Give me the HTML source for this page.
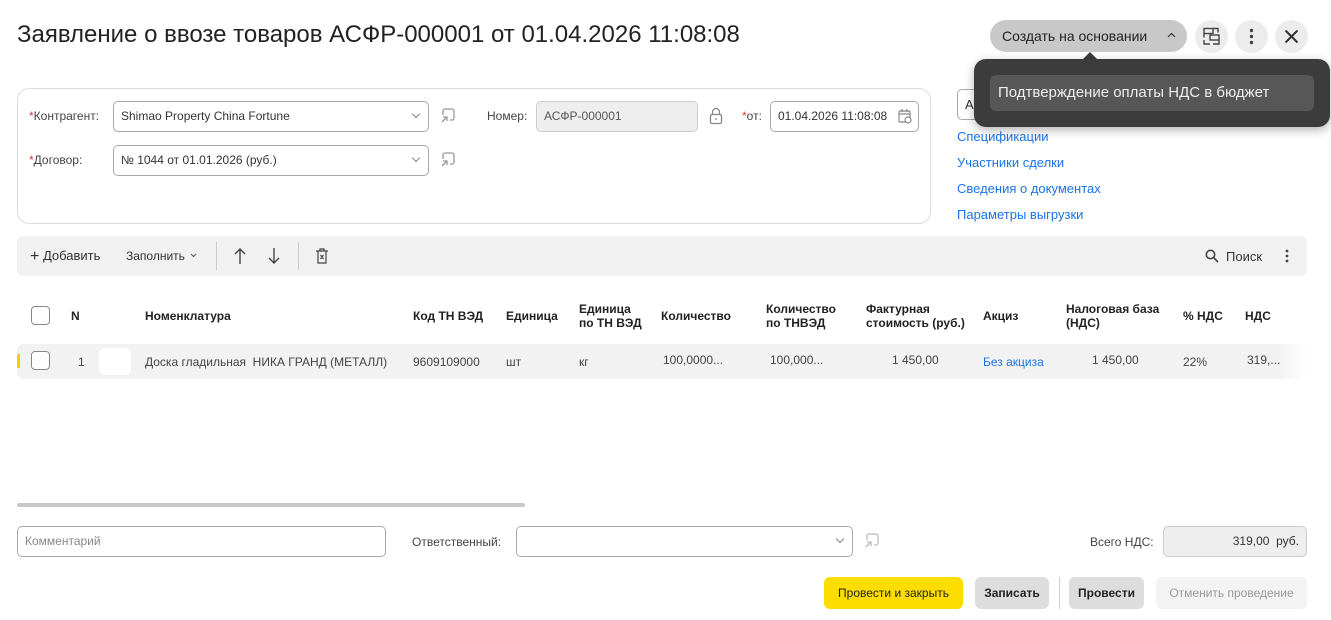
<!DOCTYPE html>
<html><head><meta charset="utf-8">
<style>
*{box-sizing:border-box;margin:0;padding:0}
body{width:1331px;height:620px;overflow:hidden;background:#fff;font-family:"Liberation Sans",sans-serif;color:#333;position:relative;font-size:12px}
.a{position:absolute;white-space:nowrap}
.inp{position:absolute;border:1px solid #aaa;border-radius:5px;background:#fff;height:31px;font-size:12px;line-height:29px;padding-left:7px;color:#333}
.lbl{position:absolute;font-size:12px;color:#444;white-space:nowrap}
.req{color:#e33}
.chev{position:absolute;right:9px;top:9px;width:6px;height:6px;border-right:1px solid #888;border-bottom:1px solid #888;transform:rotate(45deg)}
.th{position:absolute;font-size:12px;font-weight:bold;color:#222;line-height:14px;white-space:nowrap}
.td{position:absolute;font-size:12px;color:#444;white-space:nowrap;top:355px}
.link{color:#1a73e8;font-size:12px}
.rl{font-size:13px}
.cb{position:absolute;width:19px;height:19px;border:1.5px solid #888;border-radius:4px;background:#fff}
.btn{position:absolute;height:32px;border-radius:6px;font-size:12px;line-height:32px;text-align:center;color:#222}
.circ{position:absolute;width:33px;height:33px;border-radius:50%;background:#ececec}
</style></head><body>

<div class="a" style="left:17px;top:21px;font-size:24px;color:#222">Заявление о ввозе товаров АСФР-000001 от 01.04.2026 11:08:08</div>

<div class="a" style="left:990px;top:20px;width:197px;height:32px;border-radius:16px;background:#c8c8c8;font-size:14px;line-height:32px;padding-left:12px;color:#222">Создать на основании</div>
<svg class="a" style="left:1167px;top:32px" width="9" height="6" fill="none" stroke="#333" stroke-width="1.2"><path d="M1 5l3.5-3.5L8 5"/></svg>
<div class="circ" style="left:1195px;top:20px"></div>
<svg class="a" style="left:1202px;top:27px" width="19" height="19" viewBox="0 0 19 19" fill="none" stroke="#444" stroke-width="1.4"><rect x="2" y="1.5" width="9" height="5"/><rect x="8" y="8" width="9" height="5"/><path d="M2 6.5v4M2 13v4h6M17 13v4h-6M11 1.5h5v4"/></svg>
<div class="circ" style="left:1235px;top:20px"></div>
<svg class="a" style="left:1235px;top:20px" width="33" height="33"><circle cx="16.5" cy="10.5" r="1.7" fill="#444"/><circle cx="16.5" cy="16.5" r="1.7" fill="#444"/><circle cx="16.5" cy="22.5" r="1.7" fill="#444"/></svg>
<div class="circ" style="left:1275px;top:20px"></div>
<svg class="a" style="left:1275px;top:20px" width="33" height="33" stroke="#333" stroke-width="2"><path d="M10.5 10.5l12 12M22.5 10.5l-12 12"/></svg>

<div class="a" style="left:17px;top:88px;width:914px;height:136px;border:1px solid #ddd;border-radius:12px"></div>
<div class="lbl" style="left:29px;top:109px"><span class="req">*</span>Контрагент:</div>
<div class="inp" style="left:113px;top:101px;width:316px">Shimao Property China Fortune<div class="chev"></div></div>
<div class="lbl" style="left:29px;top:153px"><span class="req">*</span>Договор:</div>
<div class="inp" style="left:113px;top:145px;width:316px">№ 1044 от 01.01.2026 (руб.)<div class="chev"></div></div>
<svg class="a" style="left:439px;top:107px" width="18" height="18" fill="none" stroke="#999" stroke-width="1.3"><path d="M4 8V4a2 2 0 0 1 2-2h7a2 2 0 0 1 2 2v7a2 2 0 0 1-2 2h-2M3 15l5-5M4 10h4v4"/></svg>
<svg class="a" style="left:439px;top:151px" width="18" height="18" fill="none" stroke="#999" stroke-width="1.3"><path d="M4 8V4a2 2 0 0 1 2-2h7a2 2 0 0 1 2 2v7a2 2 0 0 1-2 2h-2M3 15l5-5M4 10h4v4"/></svg>
<div class="lbl" style="left:487px;top:109px">Номер:</div>
<div class="inp" style="left:536px;top:101px;width:162px;background:#eee;border-color:#ccc;color:#555">АСФР-000001</div>
<svg class="a" style="left:709px;top:107px" width="14" height="18" fill="none" stroke="#888" stroke-width="1.3"><rect x="1.5" y="7.5" width="11" height="9" rx="1.5"/><path d="M3.5 7.5V5a3.5 3.5 0 0 1 7 0v2.5M7 11v2"/></svg>
<div class="lbl" style="left:742px;top:109px"><span class="req">*</span>от:</div>
<div class="inp" style="left:770px;top:101px;width:149px">01.04.2026 11:08:08</div>
<svg class="a" style="left:898px;top:109px" width="14" height="15" fill="none" stroke="#888" stroke-width="1.2"><rect x="1" y="2" width="11" height="11" rx="1"/><path d="M1 5h11M4 0v3M9 0v3"/><circle cx="10" cy="11" r="3" fill="#fff"/></svg>

<div class="a" style="left:957px;top:89px;width:30px;height:31px;border:1px solid #aaa;border-radius:5px 0 0 5px;border-right:none;font-size:13px;line-height:29px;padding-left:7px">А</div>
<div class="a link rl" style="left:957px;top:129px">Спецификации</div>
<div class="a link rl" style="left:957px;top:155px">Участники сделки</div>
<div class="a link rl" style="left:957px;top:181px">Сведения о документах</div>
<div class="a link rl" style="left:957px;top:207px">Параметры выгрузки</div>

<div class="a" style="left:1082px;top:52px;width:0;height:0;border-left:8px solid transparent;border-right:8px solid transparent;border-bottom:8px solid #3c3c3c"></div>
<div class="a" style="left:974px;top:59px;width:356px;height:68px;background:#3c3c3c;border-radius:12px;box-shadow:0 3px 10px rgba(0,0,0,.3)"></div>
<div class="a" style="left:990px;top:75px;width:324px;height:36px;background:#575757;border-radius:6px;color:#eee;font-size:15px;line-height:36px;padding-left:8px">Подтверждение оплаты НДС в бюджет</div>

<div class="a" style="left:17px;top:236px;width:1290px;height:40px;background:#f1f1f1;border-radius:6px"></div>
<div class="a" style="left:30px;top:247px;font-size:13px;color:#333"><span style="font-size:16px;position:relative;top:1px">+</span> Добавить</div>
<div class="a" style="left:126px;top:249px;font-size:12px;color:#333">Заполнить</div>
<svg class="a" style="left:190px;top:253px" width="7" height="5" fill="none" stroke="#555" stroke-width="1"><path d="M1 1l2.5 2.5L6 1"/></svg>
<div class="a" style="left:216px;top:242px;width:1px;height:28px;background:#ccc"></div>
<svg class="a" style="left:232px;top:247px" width="16" height="18" stroke="#444" stroke-width="1.4" fill="none"><path d="M8 17V2M3 7l5-5 5 5"/></svg>
<svg class="a" style="left:266px;top:247px" width="16" height="18" stroke="#444" stroke-width="1.4" fill="none"><path d="M8 1v15M3 11l5 5 5-5"/></svg>
<div class="a" style="left:298px;top:242px;width:1px;height:28px;background:#ccc"></div>
<svg class="a" style="left:315px;top:248px" width="14" height="16" stroke="#444" stroke-width="1.2" fill="none"><path d="M1 3h12M5 3V1h4v2M3 3v12h8V3M5.5 7l3 4M8.5 7l-3 4"/></svg>
<svg class="a" style="left:1205px;top:249px" width="14" height="14" stroke="#444" stroke-width="1.6" fill="none"><circle cx="5.5" cy="5.5" r="4.2"/><path d="M8.5 8.5l4.5 4.5"/></svg>
<div class="a" style="left:1226px;top:249px;font-size:13px;color:#333">Поиск</div>
<svg class="a" style="left:1282px;top:248px" width="10" height="16"><circle cx="5" cy="3" r="1.4" fill="#444"/><circle cx="5" cy="8" r="1.4" fill="#444"/><circle cx="5" cy="13" r="1.4" fill="#444"/></svg>

<div class="cb" style="left:31px;top:306px"></div>
<div class="th" style="left:71px;top:309px">N</div>
<div class="th" style="left:145px;top:309px">Номенклатура</div>
<div class="th" style="left:413px;top:309px">Код ТН ВЭД</div>
<div class="th" style="left:506px;top:309px">Единица</div>
<div class="th" style="left:579px;top:302px">Единица<br>по ТН ВЭД</div>
<div class="th" style="left:661px;top:309px">Количество</div>
<div class="th" style="left:766px;top:302px">Количество<br>по ТНВЭД</div>
<div class="th" style="left:866px;top:302px">Фактурная<br>стоимость (руб.)</div>
<div class="th" style="left:983px;top:309px">Акциз</div>
<div class="th" style="left:1066px;top:302px">Налоговая база<br>(НДС)</div>
<div class="th" style="left:1183px;top:309px">% НДС</div>
<div class="th" style="left:1245px;top:309px">НДС</div>

<div class="a" style="left:17px;top:344px;width:1290px;height:35px;background:linear-gradient(to right,#f2f2f2 0,#f2f2f2 1262px,#fff 1290px);border-radius:6px 0 0 6px"></div>
<div class="a" style="left:17px;top:354px;width:3px;height:14px;background:#f5d000"></div>
<div class="cb" style="left:31px;top:351px"></div>
<div class="td" style="left:78px">1</div>
<div class="a" style="left:99px;top:348px;width:32px;height:27px;background:#fff;border-radius:6px"></div>
<div class="td" style="left:145px">Доска гладильная&nbsp; НИКА ГРАНД (МЕТАЛЛ)</div>
<div class="td" style="left:413px">9609109000</div>
<div class="td" style="left:506px">шт</div>
<div class="td" style="left:579px">кг</div>
<div class="td" style="left:663px;top:353px">100,0000...</div>
<div class="td" style="left:770px;top:353px">100,000...</div>
<div class="td" style="left:892px;top:353px">1 450,00</div>
<div class="td link" style="left:983px">Без акциза</div>
<div class="td" style="left:1092px;top:353px">1 450,00</div>
<div class="td" style="left:1183px">22%</div>
<div class="td" style="left:1247px;top:353px">319,...</div>

<div class="a" style="left:17px;top:503px;width:508px;height:4px;background:#c8c8c8;border-radius:2px"></div>

<div class="inp" style="left:17px;top:526px;width:369px;color:#888">Комментарий</div>
<div class="lbl" style="left:412px;top:535px">Ответственный:</div>
<div class="inp" style="left:516px;top:526px;width:337px"><div class="chev"></div></div>
<svg class="a" style="left:863px;top:532px" width="18" height="18" fill="none" stroke="#bbb" stroke-width="1.3"><path d="M4 8V4a2 2 0 0 1 2-2h7a2 2 0 0 1 2 2v7a2 2 0 0 1-2 2h-2M3 15l5-5M4 10h4v4"/></svg>
<div class="lbl" style="left:1090px;top:535px">Всего НДС:</div>
<div class="inp" style="left:1163px;top:526px;width:144px;background:#eee;border-color:#ccc;text-align:right;padding-right:7px">319,00&nbsp; руб.</div>

<div class="btn" style="left:824px;top:577px;width:139px;background:#fddc00">Провести и закрыть</div>
<div class="btn" style="left:975px;top:577px;width:74px;background:#ddd;font-weight:bold">Записать</div>
<div class="a" style="left:1059px;top:577px;width:1px;height:32px;background:#ccc"></div>
<div class="btn" style="left:1069px;top:577px;width:75px;background:#ddd;font-weight:bold">Провести</div>
<div class="btn" style="left:1156px;top:577px;width:151px;background:#f3f3f3;color:#999">Отменить проведение</div>
</body></html>
